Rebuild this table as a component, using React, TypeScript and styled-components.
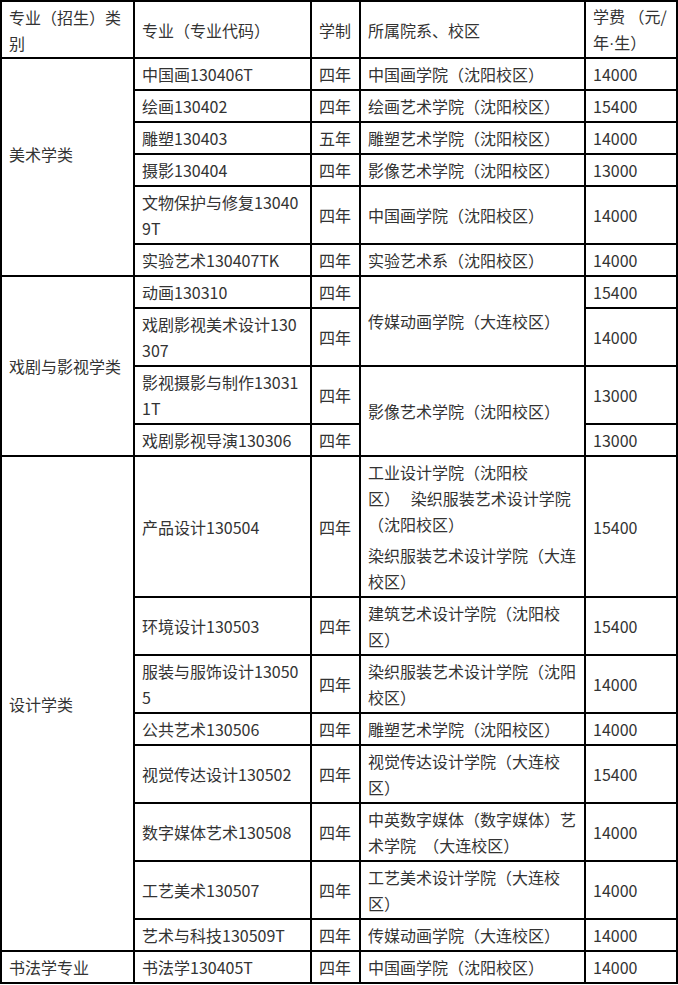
import React from 'react';
import styled, { createGlobalStyle, css } from 'styled-components';

const GlobalStyle = createGlobalStyle`
    html,
    body {
        margin: 0;
        padding: 0;
        background: #ffffff;
    }

    body {
        font-family: "Noto Sans CJK SC", "Microsoft YaHei", sans-serif;
    }
`;

const Table = styled.table`
    width: 678px;
    table-layout: fixed;
    border-collapse: collapse;
    font-size: 16px;
    line-height: 26px;
    color: #333333;
`;

const Col = styled.col<{ $width: number }>`
    width: ${({ $width }) => `${$width}px`};
`;

const cellBase = css`
    border: 2px solid #000000;
    padding: 2px 4px 2px 7px;
    text-align: left;
    vertical-align: middle;
    font-weight: 400;
`;

const headBase = css`
    ${cellBase};
    padding-top: 1px;
    padding-bottom: 0;
`;

// the source page leaves an empty line under some category names
const CategoryCell = styled.td<{ $trailingLine?: boolean }>`
    ${cellBase};
    padding-bottom: ${({ $trailingLine }) => ($trailingLine ? '28px' : '2px')};
`;

const MajorCell = styled.td`
    ${cellBase};
    padding-right: 8px;
    word-break: break-all;
`;

const YearsCell = styled.td`
    ${cellBase};
    padding-right: 0;
    white-space: nowrap;
`;

const CollegeCell = styled.td`
    ${cellBase};
`;

const FeeCell = styled.td`
    ${cellBase};
`;

const CategoryHead = styled.th`
    ${headBase};
`;

const MajorHead = styled.th`
    ${headBase};
    padding-right: 8px;
`;

const YearsHead = styled.th`
    ${headBase};
    padding-right: 0;
    white-space: nowrap;
`;

const CollegeHead = styled.th`
    ${headBase};
`;

const FeeHead = styled.th`
    ${headBase};
`;

const Interpunct = styled.span`
    font-family: "Liberation Sans", sans-serif;
`;

const CollegeLine = styled.p`
    margin: 0;

    & + & {
        margin-top: 5px;
    }
`;

interface Major {
    name: string;
    years: string;
    // undefined -> cell is covered by a rowspan above
    college?: React.ReactNode;
    collegeSpan?: number;
    fee: string;
}

interface Group {
    category: string;
    trailingLine?: boolean;
    majors: Major[];
}

const GROUPS: Group[] = [
    {
        category: '美术学类',
        trailingLine: true,
        majors: [
            { name: '中国画130406T', years: '四年', college: '中国画学院（沈阳校区）', fee: '14000' },
            { name: '绘画130402', years: '四年', college: '绘画艺术学院（沈阳校区）', fee: '15400' },
            { name: '雕塑130403', years: '五年', college: '雕塑艺术学院（沈阳校区）', fee: '14000' },
            { name: '摄影130404', years: '四年', college: '影像艺术学院（沈阳校区）', fee: '13000' },
            { name: '文物保护与修复130409T', years: '四年', college: '中国画学院（沈阳校区）', fee: '14000' },
            { name: '实验艺术130407TK', years: '四年', college: '实验艺术系（沈阳校区）', fee: '14000' }
        ]
    },
    {
        category: '戏剧与影视学类',
        majors: [
            { name: '动画130310', years: '四年', college: '传媒动画学院（大连校区）', collegeSpan: 2, fee: '15400' },
            { name: '戏剧影视美术设计130307', years: '四年', fee: '14000' },
            { name: '影视摄影与制作130311T', years: '四年', college: '影像艺术学院（沈阳校区）', collegeSpan: 2, fee: '13000' },
            { name: '戏剧影视导演130306', years: '四年', fee: '13000' }
        ]
    },
    {
        category: '设计学类',
        majors: [
            {
                name: '产品设计130504',
                years: '四年',
                college: (
                    <>
                        <CollegeLine>{'工业设计学院（沈阳校区）\u00a0\u00a0\u00a0染织服装艺术设计学院（沈阳校区）'}</CollegeLine>
                        <CollegeLine>染织服装艺术设计学院（大连校区）</CollegeLine>
                    </>
                ),
                fee: '15400'
            },
            { name: '环境设计130503', years: '四年', college: '建筑艺术设计学院（沈阳校区）', fee: '15400' },
            { name: '服装与服饰设计130505', years: '四年', college: '染织服装艺术设计学院（沈阳校区）', fee: '14000' },
            { name: '公共艺术130506', years: '四年', college: '雕塑艺术学院（沈阳校区）', fee: '14000' },
            { name: '视觉传达设计130502', years: '四年', college: '视觉传达设计学院（大连校区）', fee: '15400' },
            { name: '数字媒体艺术130508', years: '四年', college: '中英数字媒体（数字媒体）艺术学院\u00a0 （大连校区）', fee: '14000' },
            { name: '工艺美术130507', years: '四年', college: '工艺美术设计学院（大连校区）', fee: '14000' },
            { name: '艺术与科技130509T', years: '四年', college: '传媒动画学院（大连校区）', fee: '14000' }
        ]
    },
    {
        category: '书法学专业',
        majors: [{ name: '书法学130405T', years: '四年', college: '中国画学院（沈阳校区）', fee: '14000' }]
    }
];

export default function App() {
    return (
        <>
            <GlobalStyle />
            <Table>
                <colgroup>
                    <Col $width={133} />
                    <Col $width={177} />
                    <Col $width={49} />
                    <Col $width={225} />
                    <Col $width={92} />
                </colgroup>
                <thead>
                    <tr>
                        <CategoryHead>专业（招生）类别</CategoryHead>
                        <MajorHead>专业（专业代码）</MajorHead>
                        <YearsHead>学制</YearsHead>
                        <CollegeHead>所属院系、校区</CollegeHead>
                        <FeeHead>
                            学费 （元/年<Interpunct>·</Interpunct>生）
                        </FeeHead>
                    </tr>
                </thead>
                <tbody>
                    {GROUPS.map(group =>
                        group.majors.map((major, index) => (
                            <tr key={major.name}>
                                {index === 0 && (
                                    <CategoryCell rowSpan={group.majors.length} $trailingLine={group.trailingLine}>
                                        {group.category}
                                    </CategoryCell>
                                )}
                                <MajorCell>{major.name}</MajorCell>
                                <YearsCell>{major.years}</YearsCell>
                                {major.college !== undefined && (
                                    <CollegeCell rowSpan={major.collegeSpan ?? 1}>{major.college}</CollegeCell>
                                )}
                                <FeeCell>{major.fee}</FeeCell>
                            </tr>
                        ))
                    )}
                </tbody>
            </Table>
        </>
    );
}
